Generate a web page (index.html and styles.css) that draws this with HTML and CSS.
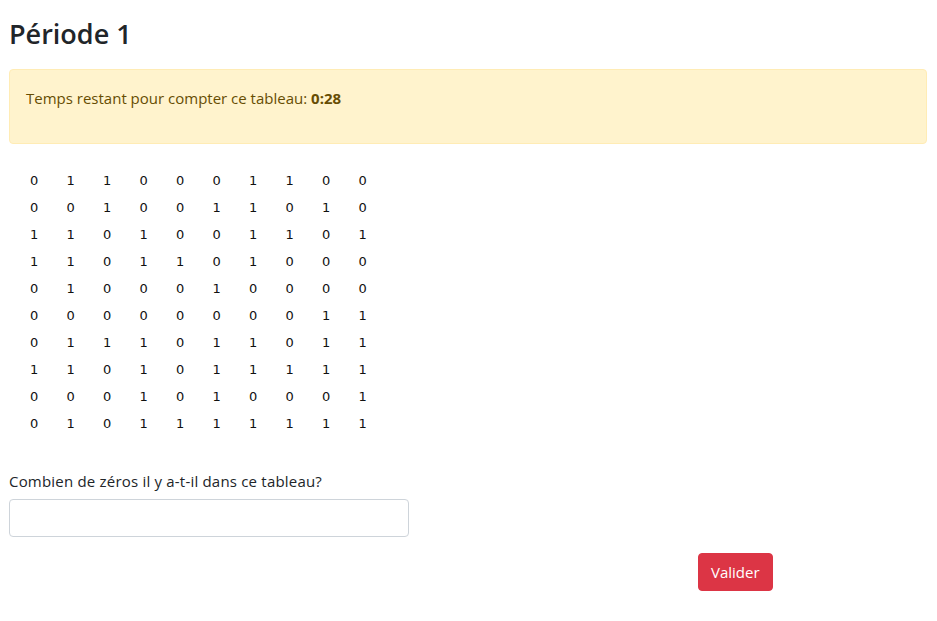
FILE: index.html
```html
<!DOCTYPE html>
<html lang="fr">
<head>
<meta charset="utf-8">
<title>Période 1</title>
<link rel="stylesheet" href="styles.css">
</head>
<body>
<div class="page">
  <h1 class="title">Période 1</h1>
  <div class="alert">
    <p>Temps restant pour compter ce tableau: <strong>0:28</strong></p>
  </div>
  <table class="grid">
    <tr><td>0</td><td>1</td><td>1</td><td>0</td><td>0</td><td>0</td><td>1</td><td>1</td><td>0</td><td>0</td></tr>
    <tr><td>0</td><td>0</td><td>1</td><td>0</td><td>0</td><td>1</td><td>1</td><td>0</td><td>1</td><td>0</td></tr>
    <tr><td>1</td><td>1</td><td>0</td><td>1</td><td>0</td><td>0</td><td>1</td><td>1</td><td>0</td><td>1</td></tr>
    <tr><td>1</td><td>1</td><td>0</td><td>1</td><td>1</td><td>0</td><td>1</td><td>0</td><td>0</td><td>0</td></tr>
    <tr><td>0</td><td>1</td><td>0</td><td>0</td><td>0</td><td>1</td><td>0</td><td>0</td><td>0</td><td>0</td></tr>
    <tr><td>0</td><td>0</td><td>0</td><td>0</td><td>0</td><td>0</td><td>0</td><td>0</td><td>1</td><td>1</td></tr>
    <tr><td>0</td><td>1</td><td>1</td><td>1</td><td>0</td><td>1</td><td>1</td><td>0</td><td>1</td><td>1</td></tr>
    <tr><td>1</td><td>1</td><td>0</td><td>1</td><td>0</td><td>1</td><td>1</td><td>1</td><td>1</td><td>1</td></tr>
    <tr><td>0</td><td>0</td><td>0</td><td>1</td><td>0</td><td>1</td><td>0</td><td>0</td><td>0</td><td>1</td></tr>
    <tr><td>0</td><td>1</td><td>0</td><td>1</td><td>1</td><td>1</td><td>1</td><td>1</td><td>1</td><td>1</td></tr>
  </table>
  <form class="form">
    <label class="label" for="answer">Combien de zéros il y a-t-il dans ce tableau?</label>
    <input class="input" id="answer" type="text">
    <div class="actions">
      <button class="btn" type="button">Valider</button>
    </div>
  </form>
</div>
</body>
</html>
```

FILE: styles.css
```css
html, body {
  margin: 0;
  padding: 0;
  background: #fff;
}
body {
  font-family: "Open Sans", "Noto Sans", sans-serif;
  font-size: 15px;
  color: #212529;
}
.page {
  padding: 0 10px 0 9px;
}
.title {
  margin: 16px 0 17px 0;
  font-size: 27px;
  font-weight: 600;
  line-height: 36px;
  color: #212529;
}
.alert {
  background: #fff3cd;
  border: 1px solid #ffecb5;
  border-radius: 4px;
  color: #664d03;
  padding: 16px 16px 17px 16px;
}
.alert p {
  margin: 0 0 16px 0;
  line-height: 24px;
}
.alert strong {
  font-weight: 700;
}
.grid {
  margin: 23px 0 0 7px;
  border-collapse: collapse;
  font-family: "DejaVu Sans", sans-serif;
  font-size: 13px;
  color: #111;
}
.grid td {
  width: 36.5px;
  height: 27px;
  padding: 0;
  text-align: center;
}
.form {
  margin-top: 32px;
  display: flex;
  flex-direction: column;
  align-items: flex-start;
}
.label {
  line-height: 24px;
  margin-bottom: 6px;
  letter-spacing: 0.2px;
}
.input {
  box-sizing: border-box;
  width: 400px;
  height: 38px;
  border: 1px solid #ced4da;
  border-radius: 4px;
  padding: 6px 12px;
  font: inherit;
}
.actions {
  margin-top: 16px;
  padding-left: 689px;
}
.btn {
  box-sizing: border-box;
  height: 38px;
  padding: 0 12px;
  background: #dc3545;
  border: 1px solid #dc3545;
  border-radius: 4px;
  color: #fff;
  font: inherit;
  cursor: pointer;
}
```
